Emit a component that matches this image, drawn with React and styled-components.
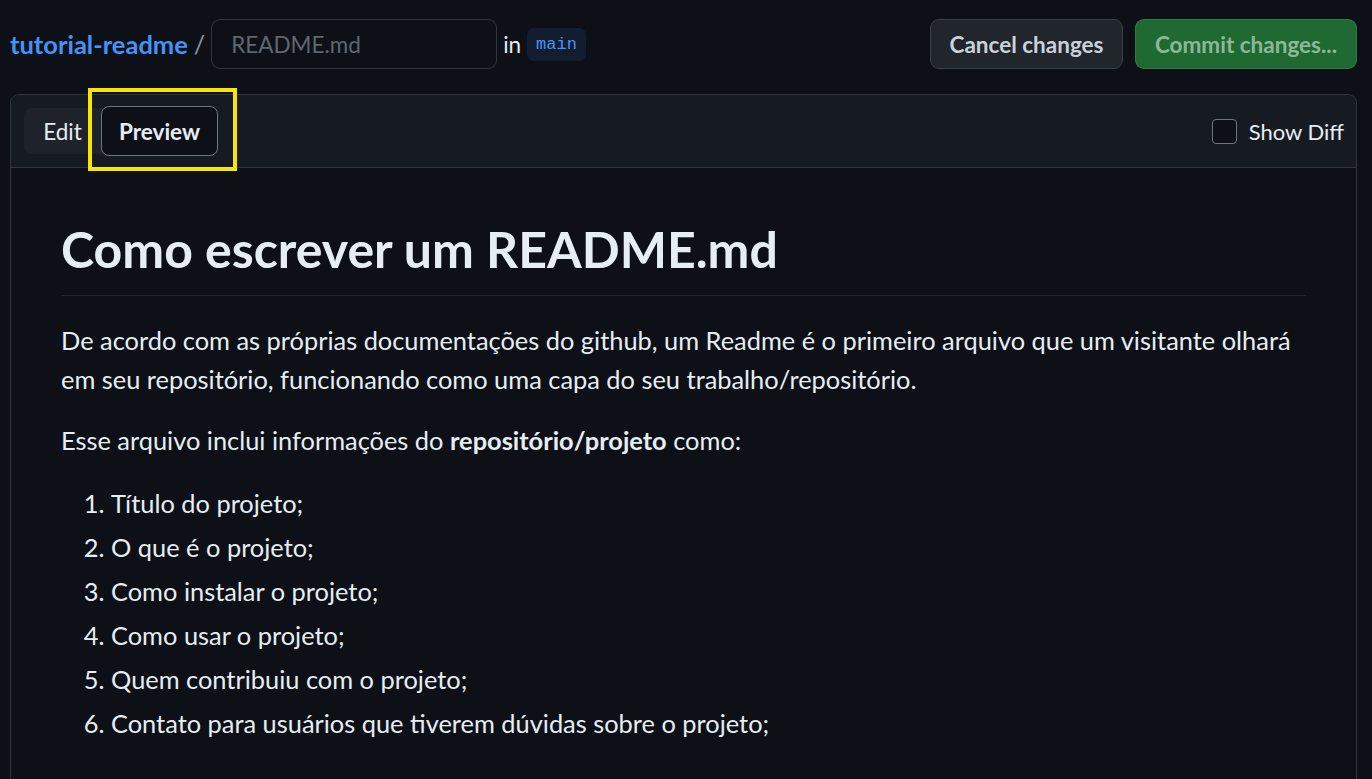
import React from 'react'
import styled, { createGlobalStyle } from 'styled-components'

const GlobalStyle = createGlobalStyle`
  html, body {
    margin: 0;
    padding: 0;
    background: #0d1117;
    color: #e6edf3;
    font-family: 'Lato', 'Noto Sans', sans-serif;
    overflow: hidden;
  }
`

const items = [
  'Título do projeto;',
  'O que é o projeto;',
  'Como instalar o projeto;',
  'Como usar o projeto;',
  'Quem contribuiu com o projeto;',
  'Contato para usuários que tiverem dúvidas sobre o projeto;',
]

export default function App() {
  return (
    <>
      <GlobalStyle />
      <Page>
        <TopBar>
          <Crumbs>
            <RepoLink>tutorial-readme</RepoLink>
            <Slash>/</Slash>
            <FileInput placeholder="README.md" />
            <InText>in</InText>
            <Branch>main</Branch>
          </Crumbs>
          <Actions>
            <Button>Cancel changes</Button>
            <Button $primary>Commit changes...</Button>
          </Actions>
        </TopBar>

        <Panel>
          <PanelHeader>
            <Tabs>
              <Tab>Edit</Tab>
              <Tab $active>Preview</Tab>
              <Highlight />
            </Tabs>
            <DiffToggle>
              <Checkbox type="checkbox" />
              Show Diff
            </DiffToggle>
          </PanelHeader>

          <Markdown>
            <H1>Como escrever um README.md</H1>
            <P>
              De acordo com as próprias documentações do github, um Readme é o primeiro arquivo que um
              visitante olhará em seu repositório, funcionando como uma capa do seu trabalho/repositório.
            </P>
            <P>
              Esse arquivo inclui informações do <strong>repositório/projeto</strong> como:
            </P>
            <List>
              {items.map((item, i) => (
                <Item key={i}>{item}</Item>
              ))}
            </List>
          </Markdown>
        </Panel>
      </Page>
    </>
  )
}

const Page = styled.div`
  padding: 19px 15px 0 10px;
  height: 779px;
  box-sizing: border-box;
`

const TopBar = styled.header`
  display: flex;
  justify-content: space-between;
  align-items: center;
  height: 50px;
`

const Crumbs = styled.div`
  display: flex;
  align-items: center;
`

const RepoLink = styled.a`
  color: #4493f8;
  font-size: 25.5px;
  font-weight: 700;
  cursor: pointer;
`

const Slash = styled.span`
  color: #8b949e;
  font-size: 25px;
  margin: 0 6px 0 6px;
`

const FileInput = styled.input`
  width: 286px;
  height: 50px;
  box-sizing: border-box;
  background: #0d1117;
  border: 1px solid #30363d;
  border-radius: 9px;
  padding: 0 19px;
  font-family: inherit;
  font-size: 22.5px;
  color: #e6edf3;
  outline: none;

  &::placeholder {
    color: #5f666f;
  }
`

const InText = styled.span`
  font-size: 22.5px;
  margin: 0 6px 0 6px;
  color: #e6edf3;
`

const Branch = styled.code`
  display: inline-flex;
  align-items: center;
  height: 33px;
  padding: 0 9px;
  border-radius: 7px;
  background: #121d2f;
  color: #4493f8;
  font-family: 'Liberation Mono', 'DejaVu Sans Mono', monospace;
  font-size: 17px;
`

const Actions = styled.div`
  display: flex;
  gap: 12px;
`

const Button = styled.button`
  height: 50px;
  padding: 0;
  border-radius: 9px;
  font-family: inherit;
  font-size: 22.5px;
  font-weight: 700;
  border: 1px solid ${(p) => (p.$primary ? 'rgba(240,246,252,0.1)' : '#3a4048')};
  background: ${(p) => (p.$primary ? '#1f6a32' : '#21262d')};
  color: ${(p) => (p.$primary ? '#8cb896' : '#c9d1d9')};
  width: ${(p) => (p.$primary ? '222px' : '193px')};
`

const Panel = styled.section`
  margin-top: 25px;
  border: 1px solid #30363d;
  border-bottom: none;
  border-radius: 9px 9px 0 0;
  height: 700px;
  background: #0d1117;
`

const PanelHeader = styled.div`
  display: flex;
  justify-content: space-between;
  align-items: center;
  height: 72px;
  padding: 0 12px 0 13px;
  background: #161b22;
  border-bottom: 1px solid #30363d;
  border-radius: 9px 9px 0 0;
`

const Tabs = styled.div`
  position: relative;
  display: flex;
  align-items: center;
  height: 46px;
  background: #1e232a;
  border-radius: 8px;
`

const Tab = styled.button`
  font-family: inherit;
  font-size: 22.5px;
  color: #e6edf3;
  font-weight: ${(p) => (p.$active ? 700 : 400)};
  background: ${(p) => (p.$active ? '#0d1117' : 'transparent')};
  border: ${(p) => (p.$active ? '1px solid #6e7681' : '1px solid transparent')};
  border-radius: 8px;
  height: ${(p) => (p.$active ? '50px' : '46px')};
  padding: 0;
  width: ${(p) => (p.$active ? '117px' : '77px')};
`

const Highlight = styled.div`
  position: absolute;
  left: 64px;
  top: -20px;
  width: 149px;
  height: 83px;
  box-sizing: border-box;
  border: 4px solid #f7e600;
  pointer-events: none;
`

const DiffToggle = styled.label`
  display: flex;
  align-items: center;
  gap: 12px;
  font-size: 22px;
  color: #e6edf3;
`

const Checkbox = styled.input`
  appearance: none;
  margin: 0;
  width: 25px;
  height: 25px;
  border: 1px solid #6e7681;
  border-radius: 4px;
  background: #0d1117;
`

const Markdown = styled.article`
  padding: 50px 50px 0 50px;
  font-size: 25.4px;
  line-height: 39px;
  color: #e6edf3;

  strong {
    font-weight: 700;
  }
`

const H1 = styled.h1`
  margin: 0 0 25px;
  padding-bottom: 14px;
  font-size: 50px;
  font-weight: 700;
  line-height: 1.25;
  border-bottom: 1px solid #21262d;
`

const P = styled.p`
  margin: 0 0 22px;
`

const List = styled.ol`
  margin: 24px 0 0;
  padding-left: 50px;
`

const Item = styled.li`
  & + & {
    margin-top: 5px;
  }
`
